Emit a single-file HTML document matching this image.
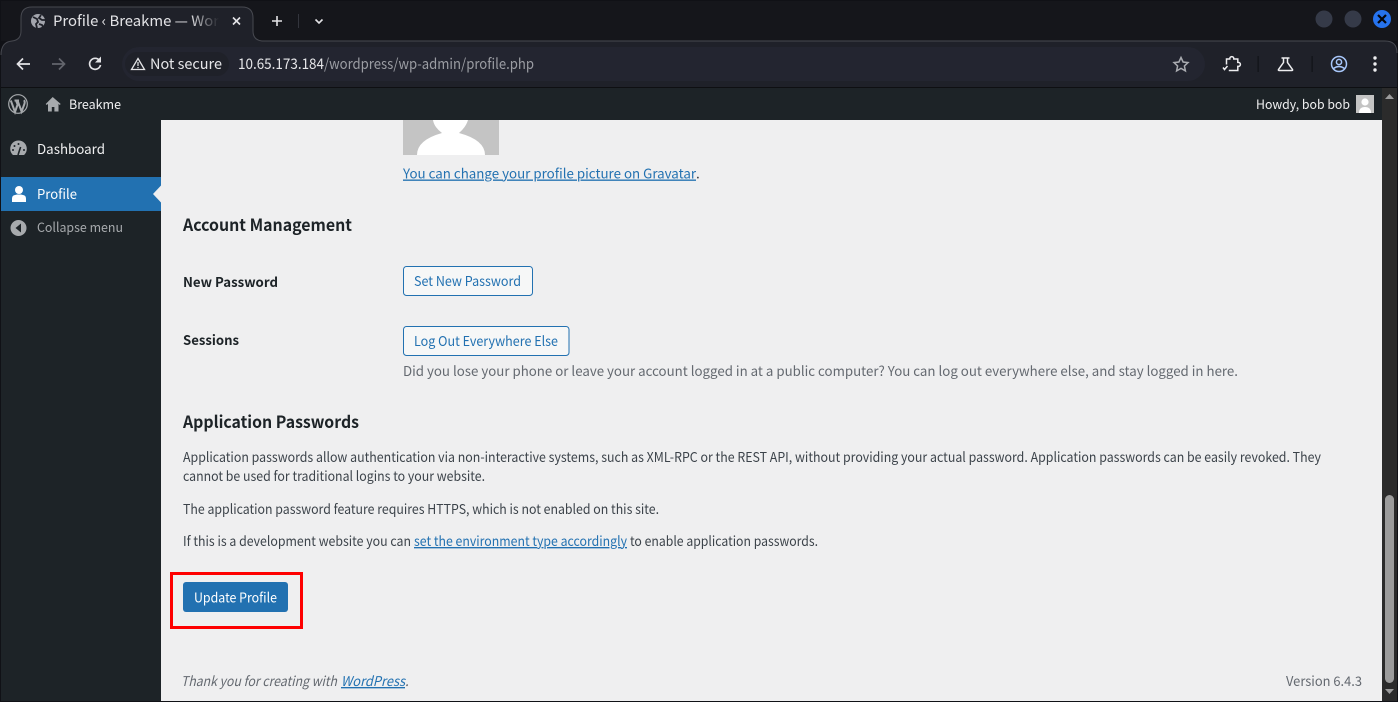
<!DOCTYPE html>
<html lang="en"><head><meta charset="utf-8"><title>Profile ‹ Breakme — WordPress</title>
<style>
html,body{margin:0;padding:0;width:1398px;height:702px;overflow:hidden;background:#efeff0}
svg{display:block}
text{font-family:"Noto Sans CJK JP","Liberation Sans",sans-serif;font-size:13.500px;white-space:pre}
.b{font-weight:700}
.l{fill:#2271b1;text-decoration:underline}
.d{fill:#3c434a}
.g{fill:#646970}
.w{fill:#f0f0f1}
</style></head><body>
<svg width="1398" height="702" viewBox="0 0 1398 702" xmlns="http://www.w3.org/2000/svg">
<defs><linearGradient id="fade" gradientUnits="userSpaceOnUse" x1="190" x2="219" y1="0" y2="0"><stop offset="0" stop-color="#e3e3e6"/><stop offset="1" stop-color="#e3e3e6" stop-opacity="0"/></linearGradient></defs>
<!-- browser frame -->
<rect width="1398" height="702" fill="#101116"/>
<rect x="1" y="1" width="1396" height="40" fill="#15161b"/>
<path d="M1 55Q1 42 12 41Q21 40 21 31V18Q21 7 32 7H242Q253 7 253 18V31Q253 40 262 41H1385Q1397 41 1397 53V88H1V55Z" fill="#1f2129"/>
<path d="M1 55Q1 42 12 41Q21 40 21 31V18Q21 7 32 7H242Q253 7 253 18V31Q253 40 262 41H1385Q1397 41 1397 53" fill="none" stroke="#474950" stroke-width="1"/>
<!-- tab -->
<circle cx="38" cy="21" r="7" fill="#a3a5ad"/><path d="M33 17l4 2 1 3-2 2 1 4M41 15l-2 3 3 2 3 0M39 24l3 1 1 2" stroke="#1f2129" stroke-width="1.800" fill="none"/>
<text x="53" y="26" textLength="166" lengthAdjust="spacingAndGlyphs" style="fill:url(#fade);font-size:14.500px">Profile ‹ Breakme — Wor</text>
<path d="M233 17.500l7 7M240 17.500l-7 7" stroke="#e3e3e6" stroke-width="1.600"/>
<path d="M272 21h10M277 16v10" stroke="#e3e3e6" stroke-width="1.600"/>
<rect x="298" y="14" width="1" height="14" fill="#33353d"/>
<path d="M315.500 19.500l3.500 3.500 3.500-3.500" stroke="#e3e3e6" stroke-width="1.600" fill="none"/>
<!-- window buttons -->
<circle cx="1324" cy="19" r="8.500" fill="#353a48"/><circle cx="1353" cy="19" r="8.500" fill="#353a48"/><circle cx="1382" cy="19" r="9" fill="#2673ee"/>
<path d="M1378 15l8 8M1386 15l-8 8" stroke="#05070c" stroke-width="2.200"/>
<!-- toolbar -->
<path d="M23 58.500L17.500 64 23 69.500M18 64H30" stroke="#e3e3e6" stroke-width="1.700" fill="none"/>
<path d="M59 58.500L64.500 64 59 69.500M64 64H52" stroke="#63656c" stroke-width="1.700" fill="none"/>
<path d="M99.500 60.500A5.500 5.500 0 1 0 100.500 65" stroke="#e3e3e6" stroke-width="1.700" fill="none"/><path d="M101 56.500v6h-6z" fill="#e3e3e6"/>
<rect x="122" y="47" width="1083" height="34" rx="17" fill="#232530"/>
<rect x="125" y="52" width="104" height="24" rx="12" fill="#1f2129"/>
<path d="M138 58.500L144.500 69.500H131.500Z" fill="none" stroke="#e3e3e6" stroke-width="1.300"/><rect x="137.400" y="62" width="1.200" height="4" fill="#e3e3e6"/><rect x="137.400" y="67" width="1.200" height="1.200" fill="#e3e3e6"/>
<text x="150" y="69" textLength="72" lengthAdjust="spacingAndGlyphs" style="fill:#e6e6e9;font-size:14.500px">Not secure</text>
<text x="238" y="69" textLength="86" lengthAdjust="spacingAndGlyphs" style="fill:#e6e6e9;font-size:14.500px">10.65.173.184</text>
<text x="324" y="69" textLength="210" lengthAdjust="spacingAndGlyphs" style="fill:#9b9da3;font-size:14.500px">/wordpress/wp-admin/profile.php</text>
<path d="M1181 57.500l2.100 4.500 4.900.6-3.600 3.400 1 4.900-4.400-2.500-4.400 2.500 1-4.900-3.600-3.400 4.900-.6z" fill="none" stroke="#a9abb0" stroke-width="1.500"/>
<path d="M1226.500 64.500V59h3.300v-.4a2 2 0 0 1 4 0v.4h4v3.400h.6a2 2 0 0 1 0 4h-.6v4.100h-9M1223 67.500l1.500 2 3-3.500" stroke="#eeeef0" stroke-width="1.500" fill="none"/>
<rect x="1257.500" y="56" width="1.200" height="16" fill="#111217"/>
<path d="M1281.500 58h8M1283.500 58v4.500l-5 7q-.5 1 .8 1h12.400q1.300 0 .8-1l-5-7V58" stroke="#eeeef0" stroke-width="1.500" fill="none"/>
<rect x="1311.500" y="56" width="1.200" height="16" fill="#111217"/>
<circle cx="1339" cy="64" r="7.500" fill="none" stroke="#a8c7fa" stroke-width="1.500"/><circle cx="1339" cy="62" r="2.600" fill="none" stroke="#a8c7fa" stroke-width="1.500"/><path d="M1333.500 68.500q5.500-4 11 0" fill="none" stroke="#a8c7fa" stroke-width="1.500"/>
<circle cx="1375" cy="58" r="1.700" fill="#eeeef0"/><circle cx="1375" cy="64" r="1.700" fill="#eeeef0"/><circle cx="1375" cy="70" r="1.700" fill="#eeeef0"/>
<rect x="1" y="87" width="1396" height="1" fill="#0e0f12"/>
<!-- WP content -->
<rect x="161" y="120" width="1221" height="581" fill="#efeff0"/>
<!-- admin bar -->
<rect x="1" y="88" width="1381" height="32" fill="#1d2327"/>
<circle cx="18" cy="104" r="9.300" fill="none" stroke="#a7aaad" stroke-width="1.200"/>
<path d="M10.800 100.500L15 112l2.600-7.500L16 100.500M14.500 100.500h4.500M17.500 100.500L21.600 111.500l2.800-7.500q.8-2.500-.5-3.800" stroke="#a7aaad" stroke-width="2" fill="none"/>
<path d="M52.700 97l-7 7 1 1 1.300-1.100V111.500h3.800v-4.500h2.600v4.500h4.100V103.900l1.200 1.100 1-1z" fill="#a7aaad"/>
<text x="69" y="109" textLength="52" lengthAdjust="spacingAndGlyphs" style="fill:#f0f0f1;font-size:13px">Breakme</text>
<text x="1256" y="109" textLength="94" lengthAdjust="spacingAndGlyphs" style="fill:#f0f0f1;font-size:13px">Howdy, bob bob</text>
<rect x="1356" y="95" width="18" height="18" fill="#c4c4c4"/><circle cx="1365" cy="102" r="3.600" fill="#fff"/><path d="M1359 113q0-6 6-6t6 6z" fill="#fff"/>
<!-- sidebar -->
<rect x="1" y="120" width="160" height="581" fill="#1d2327"/>
<path d="M13 155A8.300 8.300 0 1 1 24 155Z" fill="#a7aaad"/><path d="M18 155l2.600-8" stroke="#1d2327" stroke-width="1.600"/><circle cx="14.500" cy="146" r="1" fill="#1d2327"/><circle cx="18.500" cy="144" r="1" fill="#1d2327"/><circle cx="13" cy="150" r="1" fill="#1d2327"/><circle cx="24" cy="150" r="1" fill="#1d2327"/>
<text x="37" y="154" textLength="68" lengthAdjust="spacingAndGlyphs" class="w">Dashboard</text>
<rect x="1" y="177" width="160" height="34" fill="#2271b1"/>
<path d="M161 185.500L153 194l8 8.500z" fill="#efeff0"/>
<circle cx="19" cy="190" r="4" fill="#fff"/><path d="M12 202v-3.500q0-3 3-3.500l2-.5h4l2 .5q3 .5 3 3.500V202z" fill="#fff"/>
<text x="37" y="199" textLength="40" lengthAdjust="spacingAndGlyphs" style="fill:#fff">Profile</text>
<circle cx="18.500" cy="228" r="8" fill="#a7aaad"/><path d="M21 223.500v9L15.500 228z" fill="#1d2327"/>
<text x="37" y="232" textLength="86" lengthAdjust="spacingAndGlyphs" style="fill:#a7aaad;font-size:13px">Collapse menu</text>
<!-- avatar -->
<rect x="403" y="120" width="96" height="35" fill="#c4c4c4"/>
<path d="M417 155Q417 140 442 133Q434 127 433 120H468Q466 127 459 133Q485 140 485 155Z" fill="#fff"/>
<text x="403" y="178.500" textLength="293" lengthAdjust="spacingAndGlyphs" class="l">You can change your profile picture on Gravatar</text><text x="696" y="178.500" class="d">.</text>
<!-- account -->
<text x="183" y="231" textLength="169" lengthAdjust="spacingAndGlyphs" class="b" style="fill:#1d2327;font-size:16.500px">Account Management</text>
<text x="183" y="287" textLength="95" lengthAdjust="spacingAndGlyphs" class="b" style="fill:#1d2327">New Password</text>
<rect x="403.500" y="266.500" width="129" height="29" rx="3" fill="#f6f7f7" stroke="#2271b1"/>
<text x="414" y="286" textLength="107" lengthAdjust="spacingAndGlyphs" style="fill:#2271b1">Set New Password</text>
<text x="183" y="345" textLength="56" lengthAdjust="spacingAndGlyphs" class="b" style="fill:#1d2327">Sessions</text>
<rect x="403.500" y="326.500" width="165.500" height="29" rx="3" fill="#f6f7f7" stroke="#2271b1"/>
<text x="414" y="346" textLength="144" lengthAdjust="spacingAndGlyphs" style="fill:#2271b1">Log Out Everywhere Else</text>
<text x="403" y="376" textLength="835" lengthAdjust="spacingAndGlyphs" class="g">Did you lose your phone or leave your account logged in at a public computer? You can log out everywhere else, and stay logged in here.</text>
<!-- app passwords -->
<text x="183" y="428" textLength="176" lengthAdjust="spacingAndGlyphs" class="b" style="fill:#1d2327;font-size:16.500px">Application Passwords</text>
<text x="183" y="462" textLength="1138" lengthAdjust="spacingAndGlyphs" class="d">Application passwords allow authentication via non-interactive systems, such as XML-RPC or the REST API, without providing your actual password. Application passwords can be easily revoked. They</text>
<text x="183" y="481" textLength="302" lengthAdjust="spacingAndGlyphs" class="d">cannot be used for traditional logins to your website.</text>
<text x="183" y="514" textLength="476" lengthAdjust="spacingAndGlyphs" class="d">The application password feature requires HTTPS, which is not enabled on this site.</text>
<text x="183" y="546" textLength="228" lengthAdjust="spacingAndGlyphs" class="d">If this is a development website you can</text>
<text x="414" y="546" textLength="213" lengthAdjust="spacingAndGlyphs" class="l">set the environment type accordingly</text>
<text x="630" y="546" textLength="188" lengthAdjust="spacingAndGlyphs" class="d">to enable application passwords.</text>
<!-- submit -->
<rect x="183" y="582" width="105" height="30" rx="3" fill="#2271b1"/>
<text x="194" y="602.500" textLength="83" lengthAdjust="spacingAndGlyphs" style="fill:#fff">Update Profile</text>
<rect x="171.500" y="573.500" width="130" height="54" fill="none" stroke="#fe0000" stroke-width="3"/>
<!-- footer -->
<text x="181" y="686" textLength="156" lengthAdjust="spacingAndGlyphs" class="g" style="font-style:italic">Thank you for creating with</text>
<text x="341" y="686" textLength="64" lengthAdjust="spacingAndGlyphs" class="l" style="font-style:italic">WordPress</text>
<text x="405" y="686" class="g" style="font-style:italic">.</text>
<text x="1286" y="686" textLength="76" lengthAdjust="spacingAndGlyphs" class="g">Version 6.4.3</text>
<!-- scrollbar -->
<rect x="1382" y="88" width="15" height="613" fill="#2b2b2b"/>
<path d="M1385 99l4.500-5 4.500 5z" fill="#9c9c9c"/>
<rect x="1385" y="495" width="9" height="188" rx="4.500" fill="#9c9c9c"/>
<path d="M1385 689l4.500 5 4.500-5z" fill="#9c9c9c"/>
</svg>
</body></html>
